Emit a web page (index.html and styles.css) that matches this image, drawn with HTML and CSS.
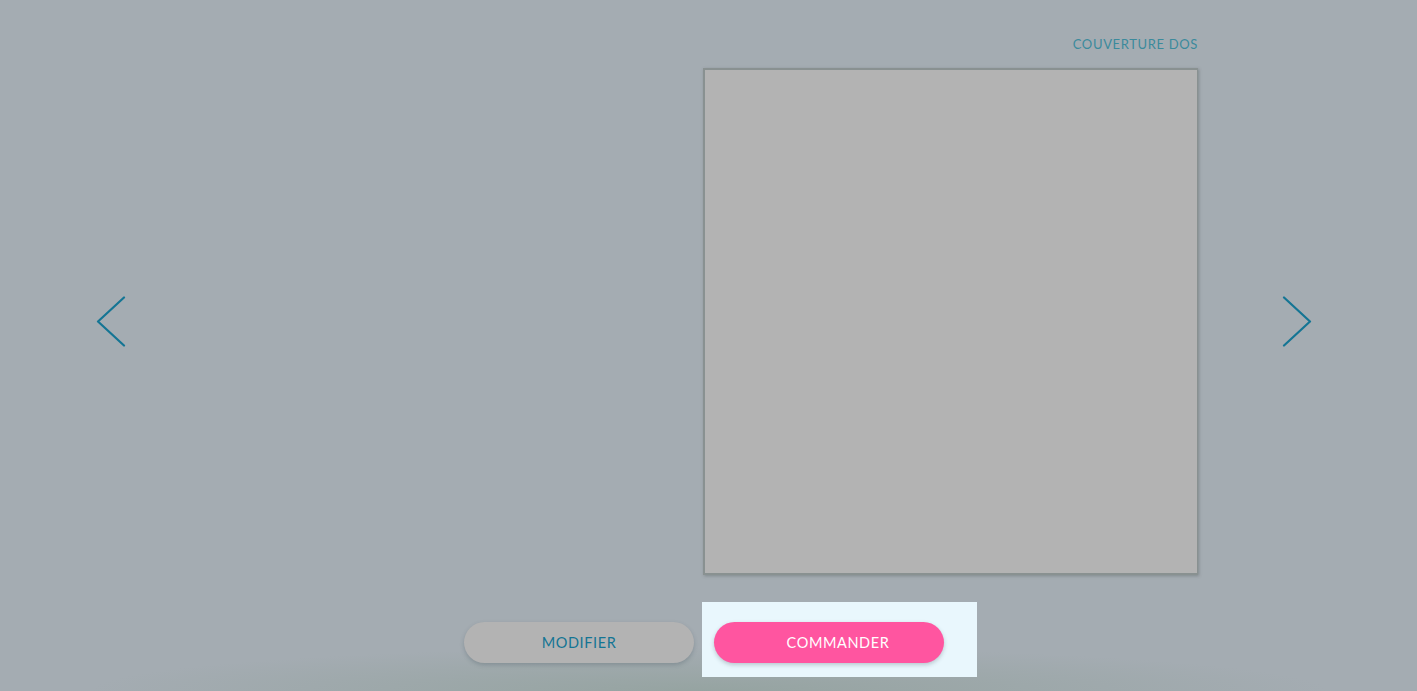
FILE: index.html
```html
<!DOCTYPE html>
<html lang="fr">
<head>
  <meta charset="UTF-8">
  <meta name="viewport" content="width=device-width, initial-scale=1.0">
  <title>Aperçu du livre</title>
  <link rel="stylesheet" href="styles.css">
</head>
<body>
  <div class="apercu">
    <div class="nav nav-prec">
      <svg viewBox="0 0 30 52" fill="none" xmlns="http://www.w3.org/2000/svg">
        <path d="M28 1.5L2 25.5L28 49.5" stroke="#147594" stroke-width="2.2" stroke-linecap="round" stroke-linejoin="round"/>
      </svg>
    </div>

    <div class="double-page">
      <div class="page page-vide"></div>
      <div class="page-bloc">
        <div class="page-titre">COUVERTURE DOS</div>
        <div class="page page-couverture"></div>
      </div>
    </div>

    <div class="nav nav-suiv">
      <svg viewBox="0 0 30 52" fill="none" xmlns="http://www.w3.org/2000/svg">
        <path d="M2 1.5L28 25.5L2 49.5" stroke="#147594" stroke-width="2.2" stroke-linecap="round" stroke-linejoin="round"/>
      </svg>
    </div>
  </div>

  <div class="actions">
    <button class="btn btn-modifier">MODIFIER</button>
    <div class="etape-active">
      <button class="btn btn-commander">COMMANDER</button>
    </div>
  </div>
</body>
</html>
```

FILE: styles.css
```css
:root {
  --color-fond: #a4acb2;
  --color-page: #b3b3b3;
  --color-bord: #899191;
  --color-teal: #147594;
  --color-titre: #3b8a9c;
  --color-rose: #ff55a0;
  --color-surbrillance: #e9f7fd;
}

html, body {
  height: 100%;
}

body {
  margin: 0;
  font-family: 'Lato', 'Open Sans', sans-serif;
  background-color: var(--color-fond);
  background-image: radial-gradient(ellipse 620px 44px at 50% 100%, rgba(140, 158, 150, 0.6), rgba(140, 158, 150, 0) 100%);
  overflow: hidden;
}

.apercu {
  display: grid;
  grid-template-columns: 208px 990px 1fr;
  align-items: center;
  padding-top: 35px;
}

/* les flèches se centrent sur la page, pas sur le titre */
.nav {
  padding-top: 34px;
}

.nav svg {
  display: block;
  width: 30px;
  height: 52px;
}

.nav-prec {
  padding-left: 96px;
}

.nav-suiv {
  padding-left: 84px;
}

.double-page {
  display: flex;
  align-items: flex-end;
}

.page-vide {
  width: 495px;
  height: 507px;
}

.page-bloc {
  display: flex;
  flex-direction: column;
  align-items: flex-end;
}

.page-titre {
  font-size: 13px;
  line-height: 18px;
  color: var(--color-titre);
  letter-spacing: 0.65px;
  margin-bottom: 15px;
}

.page-couverture {
  box-sizing: border-box;
  width: 495px;
  height: 507px;
  background-color: var(--color-page);
  border: 2px solid var(--color-bord);
  border-width: 2px 1px 2px 2px;
  box-shadow: 1px 1px 3px rgba(60, 70, 70, 0.35);
}

.actions {
  display: flex;
  align-items: flex-end;
  gap: 8px;
  padding-left: 464px;
  margin-top: 27px;
}

.etape-active {
  background-color: var(--color-surbrillance);
  padding: 20px 33px 14px 12px;
}

.btn {
  display: block;
  width: 230px;
  height: 41px;
  border: none;
  border-radius: 21px;
  font-family: inherit;
  font-size: 14.5px;
  letter-spacing: 0.6px;
  cursor: pointer;
  box-shadow: 0 2px 4px rgba(60, 80, 90, 0.28);
}

.btn-modifier {
  margin-bottom: 14px;
  background-color: var(--color-page);
  color: var(--color-teal);
}

.btn-commander {
  padding-left: 24px;
  background-color: var(--color-rose);
  color: #ffffff;
}
```
